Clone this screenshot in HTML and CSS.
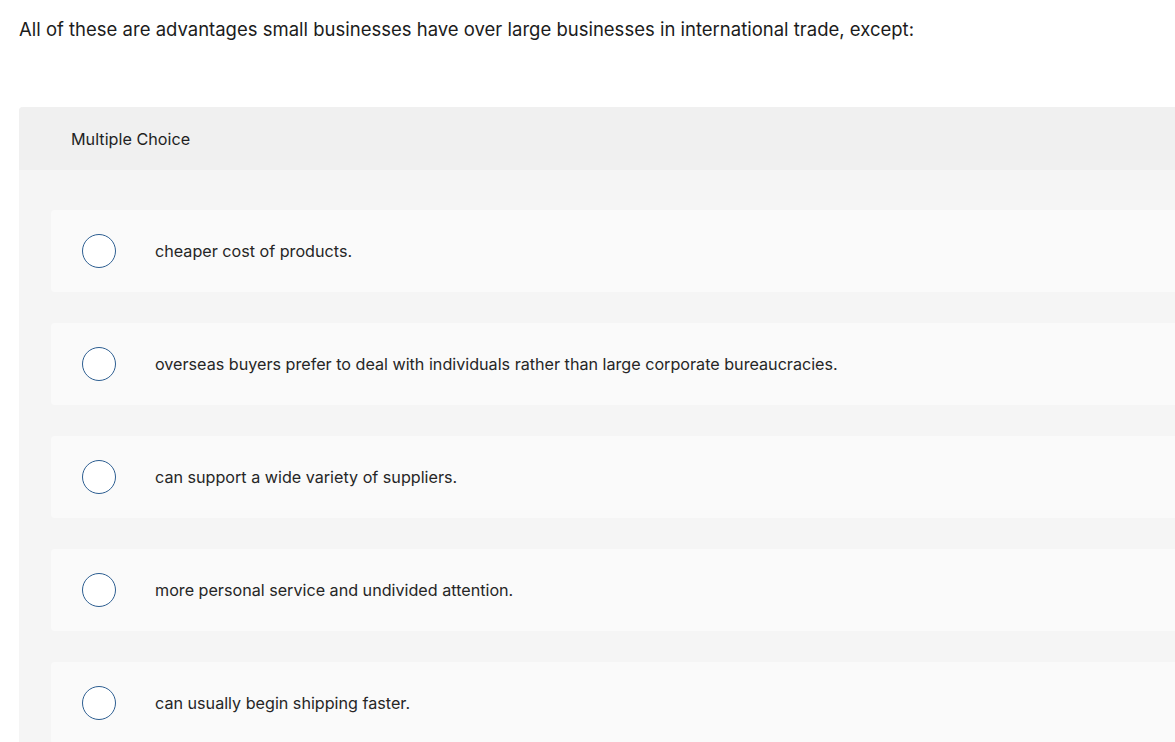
FILE: index.html
```html
<!DOCTYPE html>
<html lang="en">
<head>
<meta charset="utf-8">
<title>Multiple Choice</title>
<link rel="stylesheet" href="styles.css">
</head>
<body>
<main class="page">
  <p class="question">All of these are advantages small businesses have over large businesses in international trade, except:</p>
  <section class="panel">
    <header class="panel-head">Multiple Choice</header>
    <div class="options">
      <label class="option"><span class="radio"></span><span class="opt-text">cheaper cost of products.</span></label>
      <label class="option"><span class="radio"></span><span class="opt-text">overseas buyers prefer to deal with individuals rather than large corporate bureaucracies.</span></label>
      <label class="option"><span class="radio"></span><span class="opt-text">can support a wide variety of suppliers.</span></label>
      <label class="option"><span class="radio"></span><span class="opt-text">more personal service and undivided attention.</span></label>
      <label class="option"><span class="radio"></span><span class="opt-text">can usually begin shipping faster.</span></label>
    </div>
  </section>
</main>
</body>
</html>
```

FILE: styles.css
```css
html, body {
  margin: 0;
  padding: 0;
  background: #ffffff;
  overflow: hidden;
}
body {
  font-family: Inter, "Liberation Sans", Arial, sans-serif;
  color: #1f1f1f;
}
.page {
  padding: 16px 0 0 19px;
}
.question {
  margin: 0;
  font-size: 18.5px;
  line-height: 26px;
  color: #1c1c1c;
  white-space: nowrap;
}
.panel {
  margin-top: 65px;
  margin-right: -40px;
  background: #f5f5f5;
  border-radius: 4px 0 0 0;
  overflow: hidden;
}
.panel-head {
  background: #f0f0f0;
  height: 63px;
  display: flex;
  align-items: center;
  padding-left: 52px;
  font-size: 16.2px;
  color: #1f1f1f;
}
.options {
  display: flex;
  flex-direction: column;
  gap: 31px;
  padding: 40px 0 40px 32px;
}
.option {
  display: flex;
  align-items: center;
  height: 82px;
  background: #fafafa;
  border-radius: 4px 0 0 4px;
  padding-left: 31px;
}
.radio {
  flex: none;
  width: 32px;
  height: 32px;
  border: 1.5px solid #2d5e91;
  border-radius: 50%;
  background: #ffffff;
}
.opt-text {
  margin-left: 39px;
  font-size: 16.15px;
  color: #262626;
}
```
